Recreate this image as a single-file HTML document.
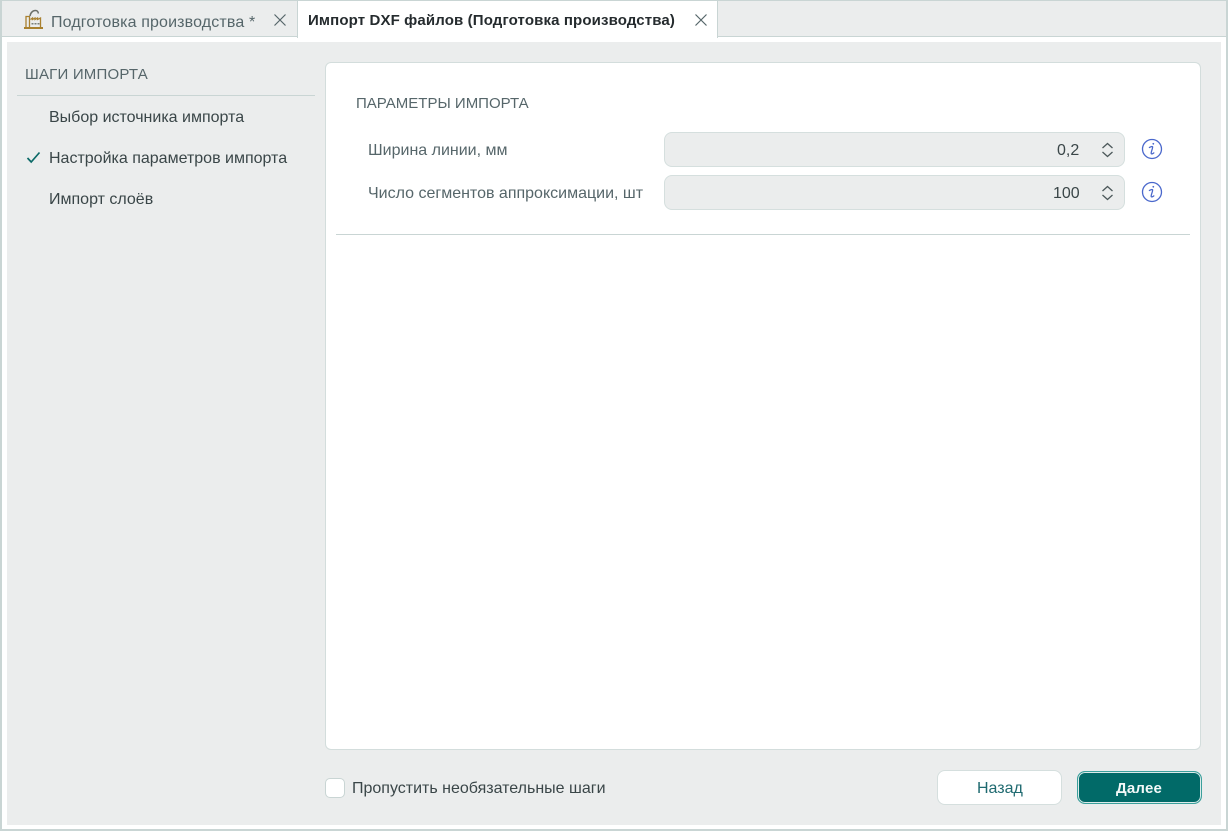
<!DOCTYPE html>
<html lang="ru">
<head>
<meta charset="utf-8">
<style>
html,body{margin:0;padding:0;width:1228px;height:831px;overflow:hidden;background:#fff}
body{position:relative;font-family:"Liberation Sans",sans-serif;color:#3a4648}
.a{position:absolute;box-sizing:border-box}
.t{position:absolute;white-space:nowrap;line-height:20px;height:20px;font-size:16px}
</style>
</head>
<body>
<!-- outer frame -->
<div class="a" style="left:0;top:0;width:1228px;height:831px;border:2px solid #c9d5d4;border-width:1px 2px 2px 2px"></div>
<!-- tab bar -->
<div class="a" style="left:2px;top:1px;width:1224px;height:36px;background:#ebeded;border-bottom:1px solid #c9d5d4"></div>
<div class="a" style="left:297px;top:1px;width:421px;height:37px;background:#fff;border-left:1px solid #c9d5d4;border-right:1px solid #c9d5d4"></div>
<!-- panel -->
<div class="a" style="left:7px;top:42px;width:1214px;height:783px;background:#ebeded"></div>
<!-- tab 1 -->
<svg class="a" style="left:24px;top:9px" width="20" height="21" viewBox="0 0 20 21" fill="none">
<path d="M2 18.500V7.500h3.500v11" stroke="#a9812f" stroke-width="1.300"/>
<path d="M6.500 10.500l2 -1.500v1.500l2.500 -1.500v1.500l2.500 -1.500v1.500l3 -1.500v9.500" stroke="#a9812f" stroke-width="1.300"/>
<path d="M0 19h19" stroke="#a9812f" stroke-width="2"/>
<path d="M6 7C6.500 3.500 9 1.500 11.500 1.500c1.700 0 2.800 1.200 2.800 3" stroke="#6b6f68" stroke-width="1.500"/>
<path d="M7.500 14.800h2M10.500 14.800h2M13.500 14.800h2" stroke="#7a7f78" stroke-width="1.500"/>
</svg>
<div class="t" style="left:51px;top:13px;color:#56666a;letter-spacing:.14px">Подготовка производства *</div>
<svg class="a" style="left:273px;top:13px" width="14" height="14" viewBox="0 0 14 14" fill="none" stroke="#56666a" stroke-width="1.200"><path d="M1.500 1.500l11 11M12.500 1.500l-11 11"/></svg>
<!-- tab 2 -->
<div class="t" style="left:308px;top:11px;color:#252b2e;font-size:15px;font-weight:700;letter-spacing:.13px">Импорт DXF файлов (Подготовка производства)</div>
<svg class="a" style="left:694px;top:13px" width="14" height="14" viewBox="0 0 14 14" fill="none" stroke="#56666a" stroke-width="1.200"><path d="M1.500 1.500l11 11M12.500 1.500l-11 11"/></svg>
<!-- left steps -->
<div class="t" style="left:25px;top:65px;color:#56666a;font-size:15px;letter-spacing:.2px">ШАГИ ИМПОРТА</div>
<div class="a" style="left:17px;top:95px;width:298px;height:1px;background:#c9d5d4"></div>
<div class="t" style="left:49px;top:108px;color:#3a4648">Выбор источника импорта</div>
<svg class="a" style="left:26px;top:151px" width="15" height="13" viewBox="0 0 15 13" fill="none" stroke="#0c6a68" stroke-width="1.700"><path d="M1.500 7l3.700 4L13.500 1.500"/></svg>
<div class="t" style="left:49px;top:149px;color:#3a4648">Настройка параметров импорта</div>
<div class="t" style="left:49px;top:190px;color:#3a4648">Импорт слоёв</div>
<!-- card -->
<div class="a" style="left:325px;top:62px;width:876px;height:688px;background:#fff;border:1px solid #d3dddc;border-radius:6px"></div>
<div class="t" style="left:356px;top:94px;color:#56666a;font-size:15px">ПАРАМЕТРЫ ИМПОРТА</div>
<div class="t" style="left:368px;top:141px;color:#56666a">Ширина линии, мм</div>
<div class="t" style="left:368px;top:184px;color:#56666a">Число сегментов аппроксимации, шт</div>
<!-- field 1 -->
<div class="a" style="left:664px;top:132px;width:461px;height:35px;background:#ebeded;border:1px solid #d5dfde;border-radius:8px"></div>
<div class="t" style="left:1057px;top:141px;color:#3a4648">0,2</div>
<svg class="a" style="left:1101px;top:142px" width="13" height="16" viewBox="0 0 13 16" fill="none" stroke="#4c585a" stroke-width="1.300"><path d="M1.500 6L6.500 1.500 11.500 6M1.500 10L6.500 14.500 11.500 10"/></svg>
<svg class="a" style="left:1141px;top:138px" width="22" height="22" viewBox="0 0 22 22" fill="none" stroke="#4a68cc" stroke-width="1.300"><circle cx="11" cy="11" r="9.500"/><path d="M8 9.800c1.200-1.100 3-1.500 3.600-1 .6.500-1.800 5.500-1.400 6.700.3.800 2 .2 3-1"/><circle cx="12.300" cy="5.800" r=".9" fill="#4a68cc" stroke="none"/></svg>
<!-- field 2 -->
<div class="a" style="left:664px;top:175px;width:461px;height:35px;background:#ebeded;border:1px solid #d5dfde;border-radius:8px"></div>
<div class="t" style="left:1053px;top:184px;color:#3a4648">100</div>
<svg class="a" style="left:1101px;top:185px" width="13" height="16" viewBox="0 0 13 16" fill="none" stroke="#4c585a" stroke-width="1.300"><path d="M1.500 6L6.500 1.500 11.500 6M1.500 10L6.500 14.500 11.500 10"/></svg>
<svg class="a" style="left:1141px;top:181px" width="22" height="22" viewBox="0 0 22 22" fill="none" stroke="#4a68cc" stroke-width="1.300"><circle cx="11" cy="11" r="9.500"/><path d="M8 9.800c1.200-1.100 3-1.500 3.600-1 .6.500-1.800 5.500-1.400 6.700.3.800 2 .2 3-1"/><circle cx="12.300" cy="5.800" r=".9" fill="#4a68cc" stroke="none"/></svg>
<div class="a" style="left:336px;top:234px;width:854px;height:1px;background:#c9d5d4"></div>
<!-- footer -->
<div class="a" style="left:325px;top:778px;width:20px;height:20px;background:#fff;border:1px solid #c9d5d4;border-radius:5px"></div>
<div class="t" style="left:352px;top:779px;color:#3a4648">Пропустить необязательные шаги</div>
<div class="a" style="left:937px;top:770px;width:125px;height:35px;background:#fff;border:1px solid #d5dfde;border-radius:8px"></div>
<div class="t" style="left:977px;top:779px;color:#1f6a70">Назад</div>
<div class="a" style="left:1077px;top:771px;width:125px;height:33px;background:#016a68;border:1px solid #3aa09c;border-radius:8px;box-shadow:inset 0 0 0 1px #dcebea"></div>
<div class="t" style="left:1116px;top:779px;color:#f2f8f8;font-size:15px;font-weight:700;letter-spacing:.2px">Далее</div>
</body>
</html>
